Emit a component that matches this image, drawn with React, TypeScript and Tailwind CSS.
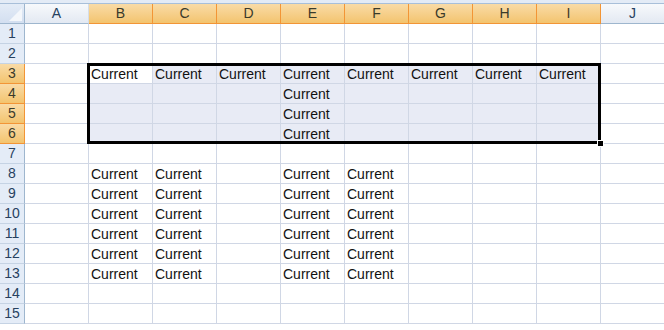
import React from 'react';

// --- Sheet data ---
const COLS = ['A', 'B', 'C', 'D', 'E', 'F', 'G', 'H', 'I', 'J'];
const ROWS = Array.from({ length: 15 }, (_, i) => i + 1);

// selection B3:I6, active cell B3
const SEL_COLS = ['B', 'C', 'D', 'E', 'F', 'G', 'H', 'I'];
const SEL_ROWS = [3, 4, 5, 6];

const cellText = (col: string, row: number): string => {
  if (row === 3 && SEL_COLS.includes(col)) return 'Current';
  if (row >= 4 && row <= 6 && col === 'E') return 'Current';
  if (row >= 8 && row <= 13 && ['B', 'C', 'E', 'F'].includes(col)) return 'Current';
  return '';
};

const font = { fontFamily: '"Liberation Sans", Arial, sans-serif' };

const App: React.FC = () => {
  return (
    <div className="relative w-[664px] h-[330px] overflow-hidden bg-white" style={font}>
      {/* top strip */}
      <div className="h-[4px] bg-[#e3ebf6] border-b border-[#a8bfd9]" />

      {/* --- COLUMN HEADERS --- */}
      <div className="flex h-[20px]">
        <div className="w-[25px] shrink-0 bg-gradient-to-b from-[#e4ecf7] to-[#d3dff0] border-r border-b border-[#9eb6ce] flex items-end justify-end p-[2px]">
          <svg width="13" height="13" viewBox="0 0 13 13">
            <polygon points="13,0 13,13 0,13" fill="#f4f7fb" />
          </svg>
        </div>
        {COLS.map((c) => {
          const sel = SEL_COLS.includes(c);
          return (
            <div
              key={c}
              className={`w-[64px] shrink-0 flex items-center justify-center text-[14px] border-r border-b ${
                sel
                  ? 'bg-gradient-to-b from-[#f9dba6] to-[#f3c46e] border-[#f29536] text-[#3a3a2a]'
                  : 'bg-gradient-to-b from-[#f7f9fc] to-[#e3e9f2] border-r-[#d5dde8] border-b-[#9eb6ce] text-[#27415f]'
              }`}
            >
              {c}
            </div>
          );
        })}
      </div>

      {/* --- ROWS --- */}
      {ROWS.map((r) => {
        const rowSel = SEL_ROWS.includes(r);
        return (
          <div key={r} className="flex h-[20px]">
            <div
              className={`w-[25px] shrink-0 flex items-center justify-center text-[14px] border-r border-b ${
                rowSel
                  ? 'bg-gradient-to-b from-[#f9dba6] to-[#f3c46e] border-[#f29536] text-[#3a3a2a]'
                  : 'bg-[#e4ecf7] border-r-[#9eb6ce] border-b-[#c5d3e4] text-[#27415f]'
              }`}
            >
              {r}
            </div>
            {COLS.map((c) => {
              const inSel = rowSel && SEL_COLS.includes(c);
              const active = r === 3 && c === 'B';
              return (
                <div
                  key={c}
                  className={`w-[64px] shrink-0 border-r border-b border-[#d0d7e5] flex items-end pl-[2px] text-[14px] leading-[17px] text-[#111] ${
                    inSel && !active ? 'bg-[#e8ebf5]' : 'bg-white'
                  }`}
                >
                  {cellText(c, r)}
                </div>
              );
            })}
          </div>
        );
      })}

      {/* selection outline + fill handle */}
      <div className="absolute left-[87px] top-[63px] w-[514px] h-[81px] border-[3px] border-black pointer-events-none" />
      <div className="absolute left-[597px] top-[140px] w-[7px] h-[7px] bg-black border border-white" />
    </div>
  );
};

export default App;
